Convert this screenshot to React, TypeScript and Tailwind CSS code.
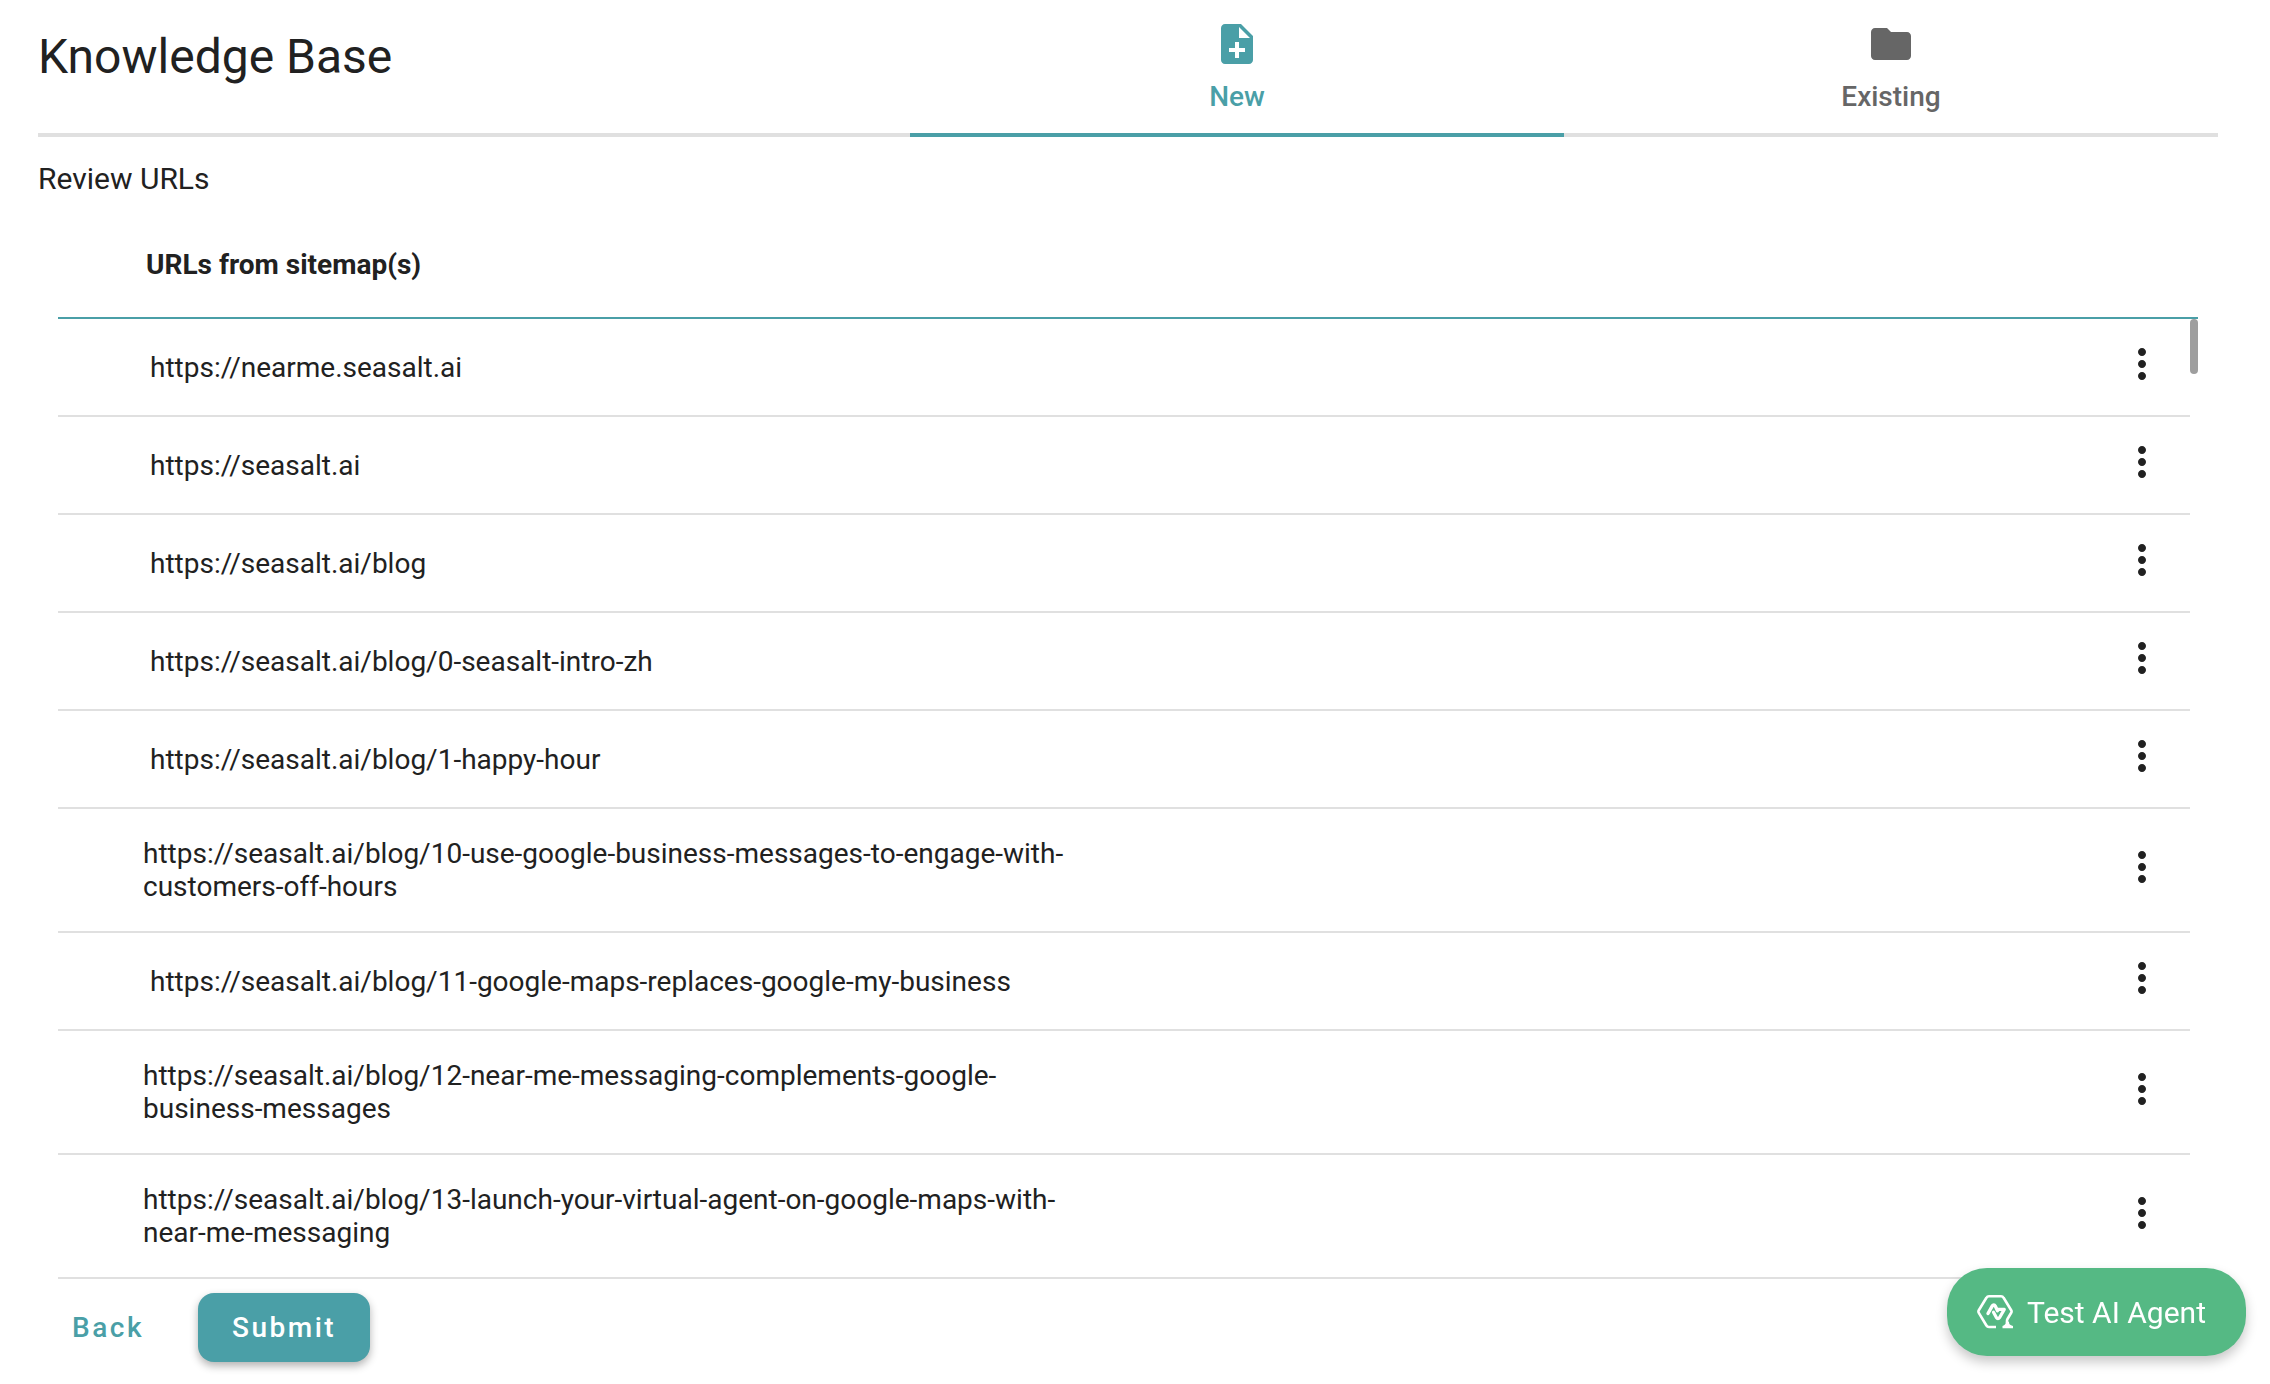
import { MdFolder, MdMoreVert, MdNoteAdd } from "react-icons/md";

type UrlRow = { url: string; long?: boolean };

const rows: UrlRow[] = [
  { url: "https://nearme.seasalt.ai" },
  { url: "https://seasalt.ai" },
  { url: "https://seasalt.ai/blog" },
  { url: "https://seasalt.ai/blog/0-seasalt-intro-zh" },
  { url: "https://seasalt.ai/blog/1-happy-hour" },
  { url: "https://seasalt.ai/blog/10-use-google-business-messages-to-engage-with-customers-off-hours", long: true },
  { url: "https://seasalt.ai/blog/11-google-maps-replaces-google-my-business" },
  { url: "https://seasalt.ai/blog/12-near-me-messaging-complements-google-business-messages", long: true },
  { url: "https://seasalt.ai/blog/13-launch-your-virtual-agent-on-google-maps-with-near-me-messaging", long: true },
];

function AgentIcon() {
  return (
    <svg viewBox="0 0 36 34" className="h-[34px] w-9" fill="none" stroke="currentColor" strokeWidth="2.6" strokeLinejoin="round" aria-hidden="true">
      <path d="M19 32h-7a3 3 0 0 1-2.600-1.500L1.800 17.800a2.500 2.500 0 0 1 0-2.600L9.400 2.800A3 3 0 0 1 12 1.300h12a3 3 0 0 1 2.600 1.500l7.600 12.400a2.500 2.500 0 0 1 0 2.600l-3.700 6.200a3.500 3.500 0 0 0-.5 2v2" />
      <path d="M29 26.500l3 .2c-.2 2.300 1 3.400 4 4.300v2.300H25.500v-2.300c2.500-.8 3.500-2.200 3.500-4.500z" fill="currentColor" stroke="none" />
      <path d="M11 18.500l4.300-7.600c.8-1.400 2.200-1.400 2.900 0l2.300 4.900" strokeWidth="3.400" strokeLinecap="round" />
      <path d="M16.500 17.200l3 5.500c.7 1.300 2.200 1.300 3 0l4.800-8.300h-6.500" strokeWidth="3.200" strokeLinecap="round" />
    </svg>
  );
}

export default function App() {
  return (
    <div className="flex min-h-screen flex-col bg-white pr-[52px] pl-[38px] font-['Roboto',sans-serif] text-[#212121]">
      <header className="flex border-b-4 border-[#e0e0e0]">
        <h1 className="w-2/5 pt-7 text-[48px] leading-[58px]">Knowledge Base</h1>
        <div role="tablist" className="-mb-1 flex w-3/5">
          <button role="tab" aria-selected="true" className="flex flex-1 flex-col items-center gap-3 border-b-4 border-[#4a9fa7] pt-5 pb-5 text-[28px] leading-[33px] font-medium text-[#4a9fa7]">
            <MdNoteAdd className="size-12" />
            New
          </button>
          <button role="tab" aria-selected="false" className="flex flex-1 flex-col items-center gap-3 border-b-4 border-[#e0e0e0] pt-5 pb-5 text-[28px] leading-[33px] font-medium text-[#666666]">
            <MdFolder className="size-12" />
            Existing
          </button>
        </div>
      </header>

      <h2 className="pt-5 text-[30px] leading-[44px]">Review URLs</h2>

      <main className="relative mx-5">
        <table className="w-full table-fixed border-separate border-spacing-0">
          <thead>
            <tr className="h-[118px]">
              <th className="border-b-2 border-[#4a9fa7] pt-2.5 pl-[88px] text-left text-[28px] leading-[33px] font-bold">URLs from sitemap(s)</th>
            </tr>
          </thead>
        </table>
        <table className="w-[calc(100%-8px)] table-fixed border-separate border-spacing-0">
          <tbody className="text-[28px] leading-[33px]">
            {rows.map(({ url, long }) => (
              <tr key={url} className={long ? "h-[124px]" : "h-[98px]"}>
                <td className={long ? "w-[48%] border-b-2 border-[#e0e0e0] pl-[85px]" : "w-[48%] border-b-2 border-[#e0e0e0] pl-[92px]"}>{url}</td>
                <td className="border-b-2 border-[#e0e0e0] pr-6 pb-1.5">
                  <button aria-label="Row actions" className="ml-auto block">
                    <MdMoreVert className="size-12" />
                  </button>
                </td>
              </tr>
            ))}
          </tbody>
        </table>
        <div className="absolute top-[118px] right-0 h-[55px] w-2 rounded-full bg-[#9e9e9e]" />
      </main>

      <footer className="flex items-center gap-5 pt-3.5">
        <button className="h-[69px] px-[34px] text-[28px] font-medium tracking-[2.5px] text-[#4a9fa7]">Back</button>
        <button className="h-[69px] rounded-2xl bg-[#4a9fa7] px-[34px] text-[28px] font-medium tracking-[2.5px] text-white shadow-[0_4px_8px_rgba(0,0,0,0.3)]">Submit</button>
      </footer>

      <button className="fixed right-6 bottom-7 flex h-[88px] items-center gap-3.5 rounded-[40px] bg-[#55b984] pr-10 pl-[30px] text-[30px] text-white shadow-[0_6px_12px_rgba(0,0,0,0.22)]">
        <AgentIcon />
        Test AI Agent
      </button>
    </div>
  );
}
